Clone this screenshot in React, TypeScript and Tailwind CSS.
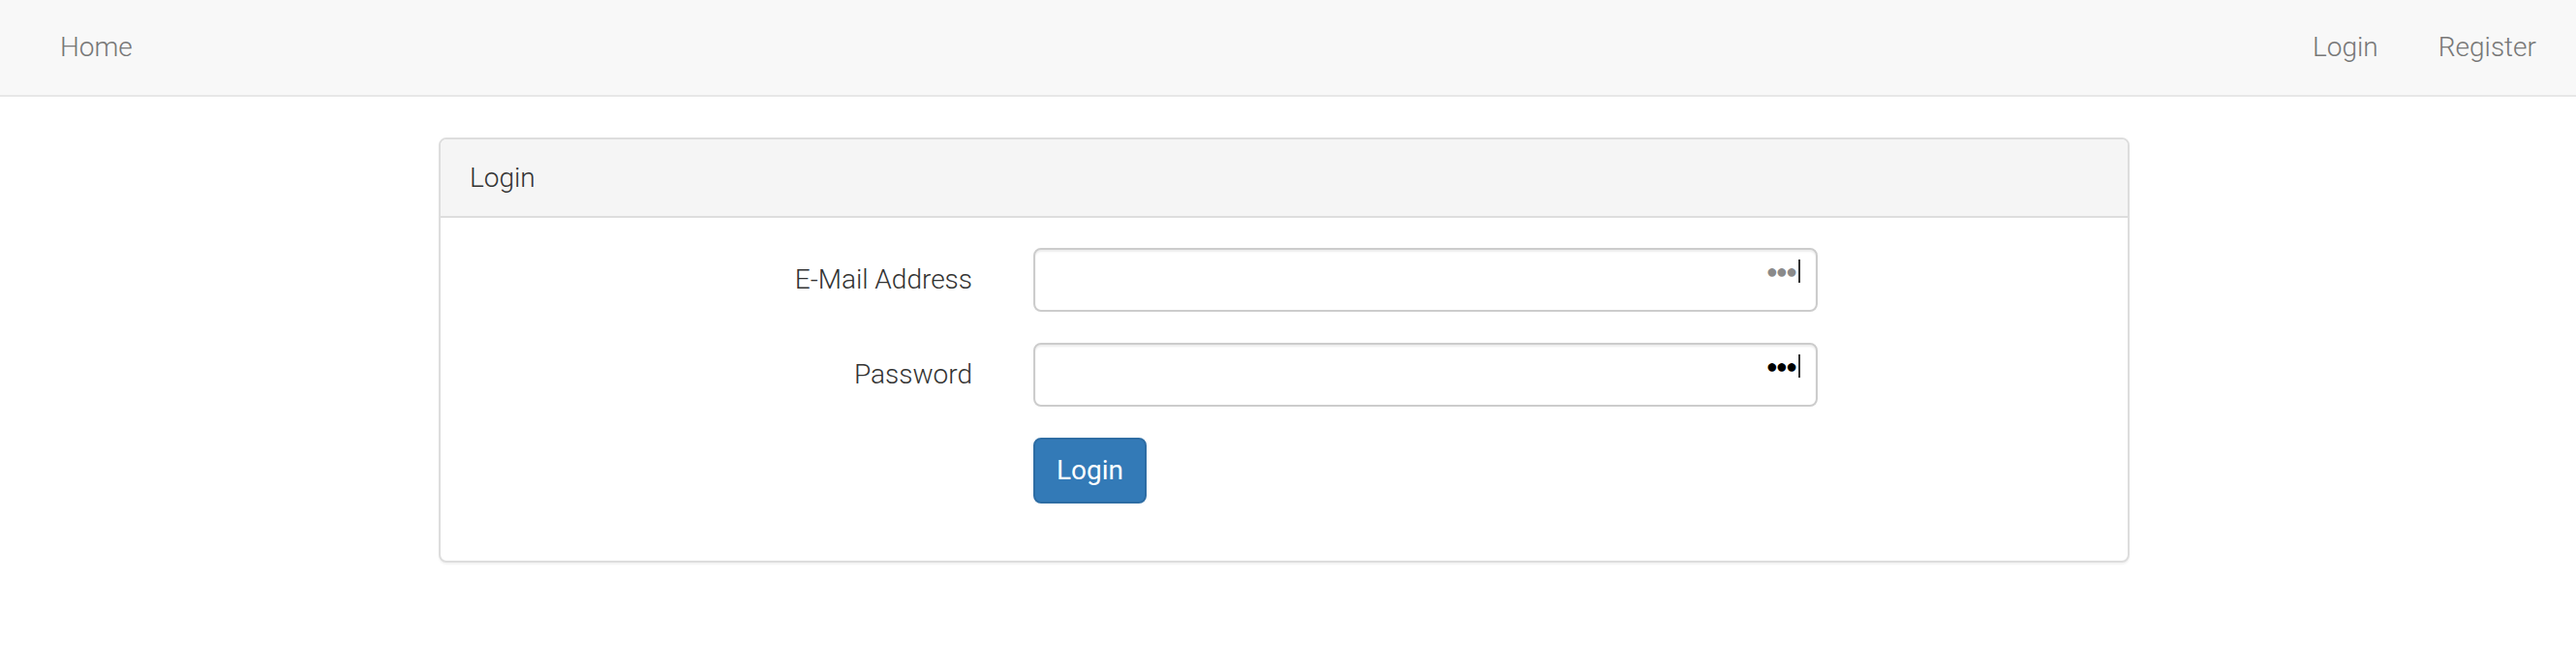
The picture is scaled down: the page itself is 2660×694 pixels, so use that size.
import { useState } from "react";

const font = "font-['Roboto','Liberation_Sans',sans-serif]";

export default function App() {
  return (
    <div className={`min-h-[694px] bg-white ${font}`}>
      <Navbar />
      <div className="flex justify-center pt-[42px]">
        <LoginPanel />
      </div>
    </div>
  );
}

function Navbar() {
  return (
    <nav className="h-[100px] bg-[#f8f8f8] border-b-2 border-[#e7e7e7] flex items-center justify-between pl-[62px] pr-[41px] text-[28px] font-light text-[#777]">
      <a href="#" className="leading-[40px]">Home</a>
      <div className="flex items-center gap-[62px]">
        <a href="#" className="leading-[40px]">Login</a>
        <a href="#" className="leading-[40px]">Register</a>
      </div>
    </nav>
  );
}

function LoginPanel() {
  const [email, setEmail] = useState("");
  const [pwd, setPwd] = useState("");

  return (
    <section className="w-[1746px] ml-[-8px] rounded-[8px] border-2 border-[#dddddd] bg-white shadow-[0_2px_2px_rgba(0,0,0,0.05)] overflow-hidden">
      <div className="h-[81px] bg-[#f5f5f5] border-b-2 border-[#dddddd] px-[30px] flex items-center text-[28px] font-light text-[#333]">
        Login
      </div>

      <form className="px-[30px] pt-[31px] pb-[59px] text-[28px] font-light text-[#333]" onSubmit={e=>e.preventDefault()}>
        <Row label="E-Mail Address">
          <Field type="email" value={email} onChange={setEmail} dots="text-[#8a8a8a]" />
        </Row>
        <Row label="Password">
          <Field type="password" value={pwd} onChange={setPwd} dots="text-black" />
        </Row>
        <div className="flex">
          <div className="w-[582px]" />
          <button type="submit" className="h-[68px] px-[22px] rounded-[8px] border-2 border-[#2e6da4] bg-[#337ab7] text-white text-[28px] leading-[40px] font-normal">
            Login
          </button>
        </div>
      </form>
    </section>
  );
}

function Row({ label, children }: { label: string; children: React.ReactNode }) {
  return (
    <div className="flex items-center mb-[32px]">
      <label className="w-[519px] text-right">{label}</label>
      <div className="ml-[63px] w-[810px]">{children}</div>
    </div>
  );
}

function Field({ type, value, onChange, dots }: { type: string; value: string; onChange: (v: string)=>void; dots: string }) {
  return (
    <div className="relative">
      <input
        type={type}
        value={value}
        onChange={e=>onChange(e.target.value)}
        className="w-full h-[66px] rounded-[8px] border-2 border-[#cccccc] bg-white px-[24px] text-[28px] text-[#555] shadow-[inset_0_2px_2px_rgba(0,0,0,0.075)] outline-none"
      />
      {/* password manager hint */}
      <span className={`absolute right-[18px] top-[12px] flex items-center text-[20px] leading-[24px] tracking-[-2px] ${dots}`}>
        ●●●<span className="ml-[3px] inline-block w-[2px] h-[24px] bg-[#333]" />
      </span>
    </div>
  );
}
